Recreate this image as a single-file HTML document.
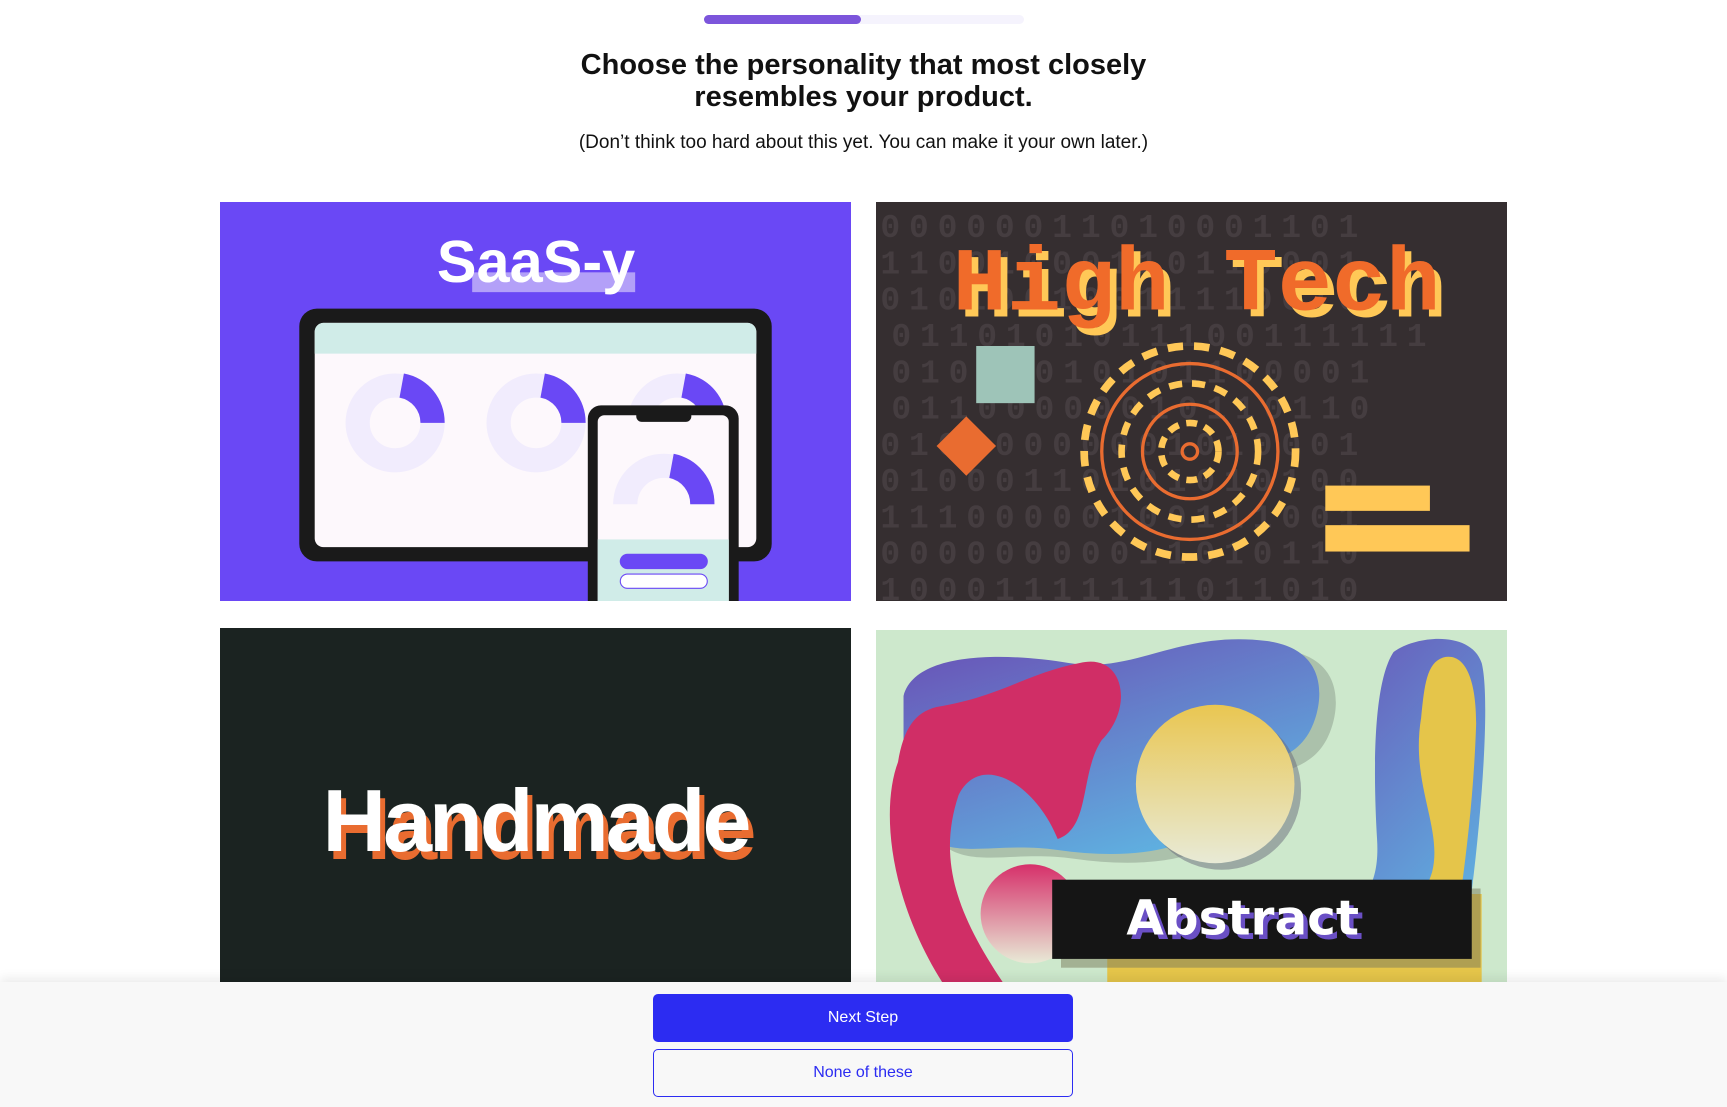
<!DOCTYPE html>
<html><head><meta charset="utf-8"><style>
*{margin:0;padding:0;box-sizing:border-box}
html,body{width:1727px;height:1107px;overflow:hidden;background:#fff;font-family:"Liberation Sans",sans-serif}
.bar{position:absolute;left:704px;top:15px;width:320px;height:9px;border-radius:5px;background:#f5f3fd}
.bar div{width:157px;height:9px;border-radius:5px;background:#7c55db}
h1{position:absolute;left:0;width:1727px;top:49px;text-align:center;font-size:29px;line-height:32px;font-weight:bold;color:#111}
.sub{position:absolute;left:0;width:1727px;top:132px;text-align:center;font-size:19px;color:#111}
.card{position:absolute;width:631px;overflow:hidden}
.card svg{display:block}
.foot{position:absolute;left:0;top:982px;width:1727px;height:125px;background:#f8f8f8;box-shadow:0 -4px 10px rgba(0,0,0,.08)}
.btn{position:absolute;left:653px;width:420px;height:48px;border-radius:5px;text-align:center;line-height:48px;font-size:16px}
</style></head><body>
<div class="bar"><div></div></div>
<h1>Choose the personality that most closely<br>resembles your product.</h1>
<div class="sub">(Don’t think too hard about this yet. You can make it your own later.)</div>

<div class="card" style="left:220px;top:202px;height:399px">
<svg width="631" height="399" viewBox="0 0 573 363" preserveAspectRatio="none">
<rect width="573" height="363" fill="#6a48f5"/>
<rect x="229" y="64" width="148" height="18" fill="#b3a0f8"/>
<text x="287" y="73" text-anchor="middle" font-family="Liberation Sans" font-weight="bold" font-size="54" fill="#fff">SaaS-y</text>
<rect x="72" y="97" width="429" height="230" rx="16" fill="#1a1a1a"/>
<rect x="86" y="110" width="401" height="204" rx="8" fill="#fdf8fc"/>
<path d="M94 110h385a8 8 0 0 1 8 8v20H86v-20a8 8 0 0 1 8-8z" fill="#d0ece8"/>
<g fill="none" stroke="#f1ecfd" stroke-width="22"><circle cx="159" cy="201" r="34"/><circle cx="287" cy="201" r="34"/><circle cx="415" cy="201" r="34"/></g>
<g fill="#6a48f5"><path d="M167 156a45 45 0 0 1 37 45h-22a23 23 0 0 0-19-23z"/><path d="M295 156a45 45 0 0 1 37 45h-22a23 23 0 0 0-19-23z"/><path d="M423 156a45 45 0 0 1 37 45h-22a23 23 0 0 0-19-23z"/></g>
<rect x="334" y="185" width="137" height="190" rx="12" fill="#1a1a1a"/>
<rect x="343" y="194" width="119" height="180" rx="6" fill="#fdf8fc"/>
<rect x="378" y="188" width="50" height="12" rx="5" fill="#1a1a1a"/>
<rect x="343" y="307" width="119" height="60" fill="#d0ece8"/>
<path d="M357 275a46 46 0 0 1 92 0h-22a24 24 0 0 0-48 0z" fill="#f1ecfd"/>
<path d="M412 229a46 46 0 0 1 37 46h-22a24 24 0 0 0-19-24z" fill="#6a48f5"/>
<rect x="363" y="320" width="80" height="14" rx="7" fill="#6a48f5"/>
<rect x="363.5" y="338.5" width="79" height="13" rx="6.5" fill="#fff" stroke="#6a48f5"/>
</svg></div>

<div class="card" style="left:876px;top:202px;height:399px">
<svg width="631" height="399" viewBox="0 0 573 363" preserveAspectRatio="none">
<rect width="573" height="363" fill="#352e30"/>
<g font-family="Liberation Mono" font-weight="bold" font-size="30" fill="#453d40" letter-spacing="8">
<text x="4" y="32">00000011010001101</text><text x="4" y="65">11001000110110001</text>
<text x="4" y="98">01010010011110010</text><text x="14" y="131">0110101011100111111</text>
<text x="14" y="164">01011010101100001</text><text x="14" y="197">01100000010110110</text>
<text x="4" y="230">01010000001010001</text><text x="4" y="263">01000110101010100</text>
<text x="4" y="296">11100000100111001</text><text x="4" y="329">00000000011010110</text>
<text x="4" y="362">10001111111011010</text></g>
<g font-family="Liberation Mono" font-weight="bold" font-size="82" text-anchor="middle">
<text x="297" y="104" fill="#ffc857">High Tech</text>
<text x="291" y="98" fill="#f06b2a">High Tech</text></g>
<rect x="91" y="131" width="53" height="52" fill="#9ec4b8"/>
<path d="M82 195l27 27-27 27-27-27z" fill="#e96c30"/>
<g fill="none">
<circle cx="285" cy="227" r="96" stroke="#ffc857" stroke-width="7" stroke-dasharray="14 10"/>
<circle cx="285" cy="227" r="80" stroke="#e96c30" stroke-width="3"/>
<circle cx="285" cy="227" r="62" stroke="#ffc857" stroke-width="6" stroke-dasharray="12 9"/>
<circle cx="285" cy="227" r="43" stroke="#e96c30" stroke-width="3"/>
<circle cx="285" cy="227" r="26" stroke="#ffc857" stroke-width="6" stroke-dasharray="10 7"/>
<circle cx="285" cy="227" r="7" stroke="#e96c30" stroke-width="3"/></g>
<rect x="408" y="258" width="95" height="23" fill="#ffc857"/>
<rect x="408" y="294" width="131" height="24" fill="#ffc857"/>
</svg></div>

<div class="card" style="left:220px;top:628px;height:354px;background:#1b2321">
<div style="position:absolute;left:0;width:631px;top:142px;text-align:center;font-family:'Liberation Sans',sans-serif;font-weight:bold;font-size:88px;color:#fff;text-shadow:5px 8px 0 #e96c30;letter-spacing:-3px">Handmade</div>
</div>

<div class="card" style="left:876px;top:630px;height:352px">
<svg width="631" height="352" viewBox="0 0 573 320" preserveAspectRatio="none">
<defs>
<linearGradient id="bl" x1="0" y1="0" x2="0.6" y2="1"><stop offset="0" stop-color="#6a4fb5"/><stop offset="1" stop-color="#5fb0e0"/></linearGradient>
<linearGradient id="yl" x1="0" y1="0" x2="0" y2="1"><stop offset="0" stop-color="#e9c651"/><stop offset="1" stop-color="#e8ead6"/></linearGradient>
<linearGradient id="pk" x1="0" y1="0" x2="0" y2="1"><stop offset="0" stop-color="#d6306a"/><stop offset="1" stop-color="#e8ead6"/></linearGradient>
</defs>
<rect width="573" height="320" fill="#cde8cc"/>
<path d="M30 60c10-40 90-40 150-30 60 10 100-30 180-20 60 8 50 60 40 80-20 40-60 20-80 70-15 40-80 50-150 40-70-10-110 20-140-40z" fill="#8a9a8a" opacity=".5" transform="translate(10 8)"/>
<path d="M25 60c10-40 90-40 150-30 60 10 100-30 180-20 60 8 50 60 40 80-20 40-60 20-80 70-15 40-80 50-150 40-70-10-110 20-140-40z" fill="url(#bl)"/>
<path d="M470 20c20-15 70-20 80 10 10 40-5 200-20 280H380c20-60 80-40 75-120-3-50-5-140 15-170z" fill="url(#bl)"/>
<path d="M515 25c20-5 30 20 30 60-3 90-15 160-25 235h-90c10-50 60-50 75-100 10-40-20-80-10-140 3-30 5-50 20-55z" fill="#e5c54a"/>
<path d="M20 120c-15 40-10 120 40 200h55c-40-60-60-110-40-170 20-40 70-10 90 40 30-10 20-60 40-90 30-30 20-80-20-70-50 10-70 30-130 40-20 5-30 20-35 50z" fill="#d02e66"/>
<circle cx="314" cy="146" r="72" fill="#6a6a7a" opacity=".5"/>
<circle cx="308" cy="140" r="72" fill="url(#yl)"/>
<path d="M210 240h340v80H210z" fill="#e5c54a"/>
<circle cx="140" cy="258" r="45" fill="url(#pk)"/>
<rect x="168" y="235" width="381" height="72" fill="#7a7a5a" opacity=".5"/>
<rect x="160" y="227" width="381" height="72" fill="#151515"/>
<g font-family="DejaVu Sans" font-weight="bold" font-size="44" text-anchor="middle">
<text x="337" y="281" fill="#6a4fc5">Abstract</text>
<text x="333" y="277" fill="#fff">Abstract</text></g>
</svg></div>

<div class="foot">
<div class="btn" style="top:12px;background:#2c2cf2;color:#fff">Next Step</div>
<div class="btn" style="top:67px;background:#f8f8f8;color:#2c2cf2;border:1px solid #2c2cf2;line-height:46px">None of these</div>
</div>
</body></html>
